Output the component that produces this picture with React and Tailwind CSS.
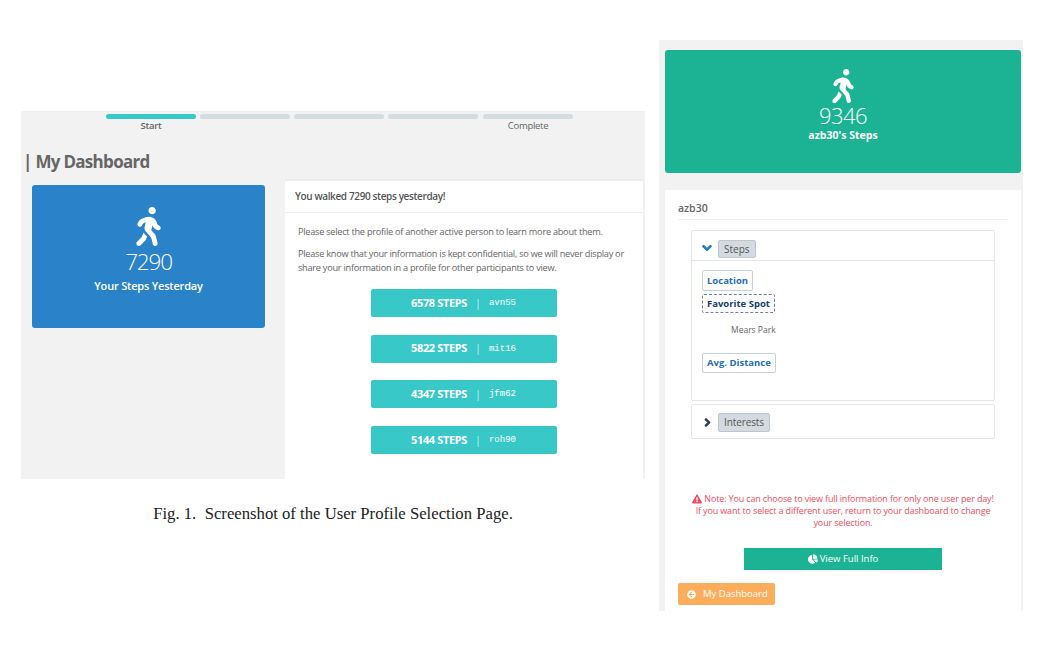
import React from 'react';
import {
  FaWalking,
  FaChevronDown,
  FaChevronRight,
  FaExclamationTriangle,
  FaChartPie,
  FaArrowCircleLeft,
} from 'react-icons/fa';

const profiles = [
  { steps: 6578, user: 'avn55' },
  { steps: 5822, user: 'mit16' },
  { steps: 4347, user: 'jfm62' },
  { steps: 5144, user: 'roh90' },
];

const StepBar = ({ label, active, bold }) => (
  <div className="w-[90px] flex flex-col items-center">
    <div className={`w-full h-[5px] rounded-full ${active ? 'bg-[#38c8c8]' : 'bg-[#d3dce0]'}`}></div>
    <span className={`h-[14px] text-[9.5px] leading-[14px] tracking-[-0.3px] ${bold ? 'font-semibold text-[#666]' : 'text-[#666]'}`}>{label}</span>
  </div>
);

const ProfileButton = ({ steps, user }) => (
  <div className="w-[186px] h-[28px] rounded-[2px] bg-[#38c8c8] text-white flex items-center justify-center">
    <span className="text-[11px] font-bold font-['Noto_Sans',sans-serif] tracking-[-0.35px]">{steps} STEPS</span>
    <span className="mx-[8px] text-[11px] font-light">|</span>
    <span className="mt-[2px] text-[9px] font-['Liberation_Mono',monospace]">{user}</span>
  </div>
);

const SelectionPage = () => (
  <div className="w-[624px] h-[368px] mt-[71px] bg-[#f2f2f2]">
    <div className="flex gap-[4px] pl-[85px] pt-[3px]">
      <StepBar label="Start" active bold />
      <StepBar label="" />
      <StepBar label="" />
      <StepBar label="" />
      <div className="ml-[1px]">
        <StepBar label="Complete" />
      </div>
    </div>
    <h1 className="mt-[15px] pl-[2px] h-[27px] text-[17px] leading-[27px] font-bold text-[#666] tracking-[-0.7px]">| My Dashboard</h1>
    <div className="flex items-start">
      <div className="ml-[11px] mt-[10px] w-[233px] h-[143px] rounded-[3px] bg-[#2a82c9] text-white flex flex-col items-center pt-[22px]">
        <FaWalking className="text-[39px]" />
        <div className="text-[22.5px] leading-[28px] font-light mt-[2px] tracking-[-1.2px]">7290</div>
        <div className="text-[11px] leading-[18px] font-semibold mt-[1px] tracking-[-0.2px]">Your Steps Yesterday</div>
      </div>
      <div className="ml-[20px] mt-[4px] w-[358px] h-[300px] bg-white border-t-2 border-[#e8edf0]">
        <div className="h-[32px] pl-[10px] border-b border-[#eeeeee] flex items-center text-[10px] font-semibold text-[#555] tracking-[-0.37px]">You walked 7290 steps yesterday!</div>
        <div className="pl-[13px] pt-[12px] text-[9.2px] leading-[14px] text-[#666] tracking-[-0.26px] whitespace-nowrap">
          <p>Please select the profile of another active person to learn more about them.</p>
          <p className="mt-[8px]">
            Please know that your information is kept confidential, so we will never display or
            <br />
            share your information in a profile for other participants to view.
          </p>
        </div>
        <div className="mt-[14px] flex flex-col items-center gap-[17.6px] pr-[1px]">
          {profiles.map(p => (
            <ProfileButton key={p.user} steps={p.steps} user={p.user} />
          ))}
        </div>
      </div>
    </div>
  </div>
);

const OtherProfile = () => (
  <div className="w-[364px] h-[571px] ml-[14px] bg-[#f2f2f2] pt-[10px] pl-[6px] pr-[2px]">
    <div className="h-[123px] rounded-[3px] bg-[#1bb394] text-white flex flex-col items-center pt-[19px]">
      <FaWalking className="text-[34px]" />
      <div className="text-[22px] leading-[26px] font-light -mt-[1px] tracking-[-0.6px]">9346</div>
      <div className="text-[10.5px] leading-[13px] font-bold mt-[1px]">azb30's Steps</div>
    </div>
    <div className="mt-[17px] h-[421px] bg-white">
      <div className="ml-[13px] mr-[13px] pt-[11px] h-[30px] border-b border-[#f0f0f0] text-[10.5px] leading-[14px] font-semibold text-[#666]">azb30</div>
      <div className="ml-[26px] mr-[26px] mt-[10px] h-[171px] border border-[#e6e6e6] rounded-[2px]">
        <div className="h-[30px] border-b border-[#e6e6e6] flex items-end pb-[2px] pl-[10px]">
          <FaChevronDown className="text-[10px] text-[#1f80c4] mb-[5px] [stroke-width:60px]" />
          <span className="ml-[6px] h-[18px] px-[5px] rounded-[2px] border border-[#bcc6cc] bg-[#d3dbe0] text-[10px] leading-[16px] text-[#555]">Steps</span>
        </div>
        <div className="pl-[10px] pt-[9px] flex flex-col items-start text-[9.5px] font-bold">
          <span className="h-[21px] px-[4px] border border-[#c5d0d8] rounded-[2px] text-[#1f6fb5] leading-[19px]">Location</span>
          <span className="mt-[3px] h-[19px] px-[4px] border border-dashed border-[#6e7f96] rounded-[2px] text-[#14406e] leading-[17px]">Favorite Spot</span>
          <span className="mt-[11px] ml-[29px] font-normal text-[8.5px] leading-[12px] text-[#666]">Mears Park</span>
          <span className="mt-[17px] h-[20px] px-[4px] border border-[#c5d0d8] rounded-[2px] text-[#1f6fb5] leading-[18px]">Avg. Distance</span>
        </div>
      </div>
      <div className="ml-[26px] mr-[26px] mt-[3px] h-[35px] border border-[#e6e6e6] rounded-[2px] flex items-center pl-[11px] pt-[2px]">
        <FaChevronRight className="text-[9px] text-[#2d3a55] [stroke-width:60px]" />
        <span className="ml-[6px] h-[19px] px-[5px] rounded-[2px] border border-[#bcc6cc] bg-[#d3dbe0] text-[10px] leading-[17px] text-[#555] tracking-[-0.1px]">Interests</span>
      </div>
      <div className="mt-[54px] mx-[26px] text-center text-[9px] leading-[12px] tracking-[-0.15px] text-[#ee4d63] whitespace-nowrap">
        <FaExclamationTriangle className="inline text-[10px] mr-[2px] -mt-[2px]" />
        Note: You can choose to view full information for only one user per day!
        <br />
        If you want to select a different user, return to your dashboard to change
        <br />
        your selection.
      </div>
      <div className="mt-[19px] ml-[79px] w-[198px] h-[22px] bg-[#1bb394] text-white text-[9.5px] flex items-center justify-center">
        <FaChartPie className="text-[10px] mr-[2px]" />
        View Full Info
      </div>
      <div className="mt-[13px] ml-[13px] w-[97px] h-[22px] rounded-[2px] bg-[#fbad5c] text-white text-[9.5px] flex items-center pl-[9px]">
        <FaArrowCircleLeft className="text-[9px] mr-[7px]" />
        My Dashboard
      </div>
    </div>
  </div>
);

export default function App() {
  return (
    <div className="w-[1047px] h-[672px] bg-white overflow-hidden font-['Open_Sans',sans-serif]">
      <div className="flex items-start pl-[21px] pt-[40px]">
        <div>
          <SelectionPage />
          <p className="mt-[24px] text-center h-[22px] text-[16.7px] leading-[22px] text-[#222] font-['Liberation_Serif',serif]">Fig. 1.&nbsp; Screenshot of the User Profile Selection Page.</p>
        </div>
        <OtherProfile />
      </div>
    </div>
  );
}
